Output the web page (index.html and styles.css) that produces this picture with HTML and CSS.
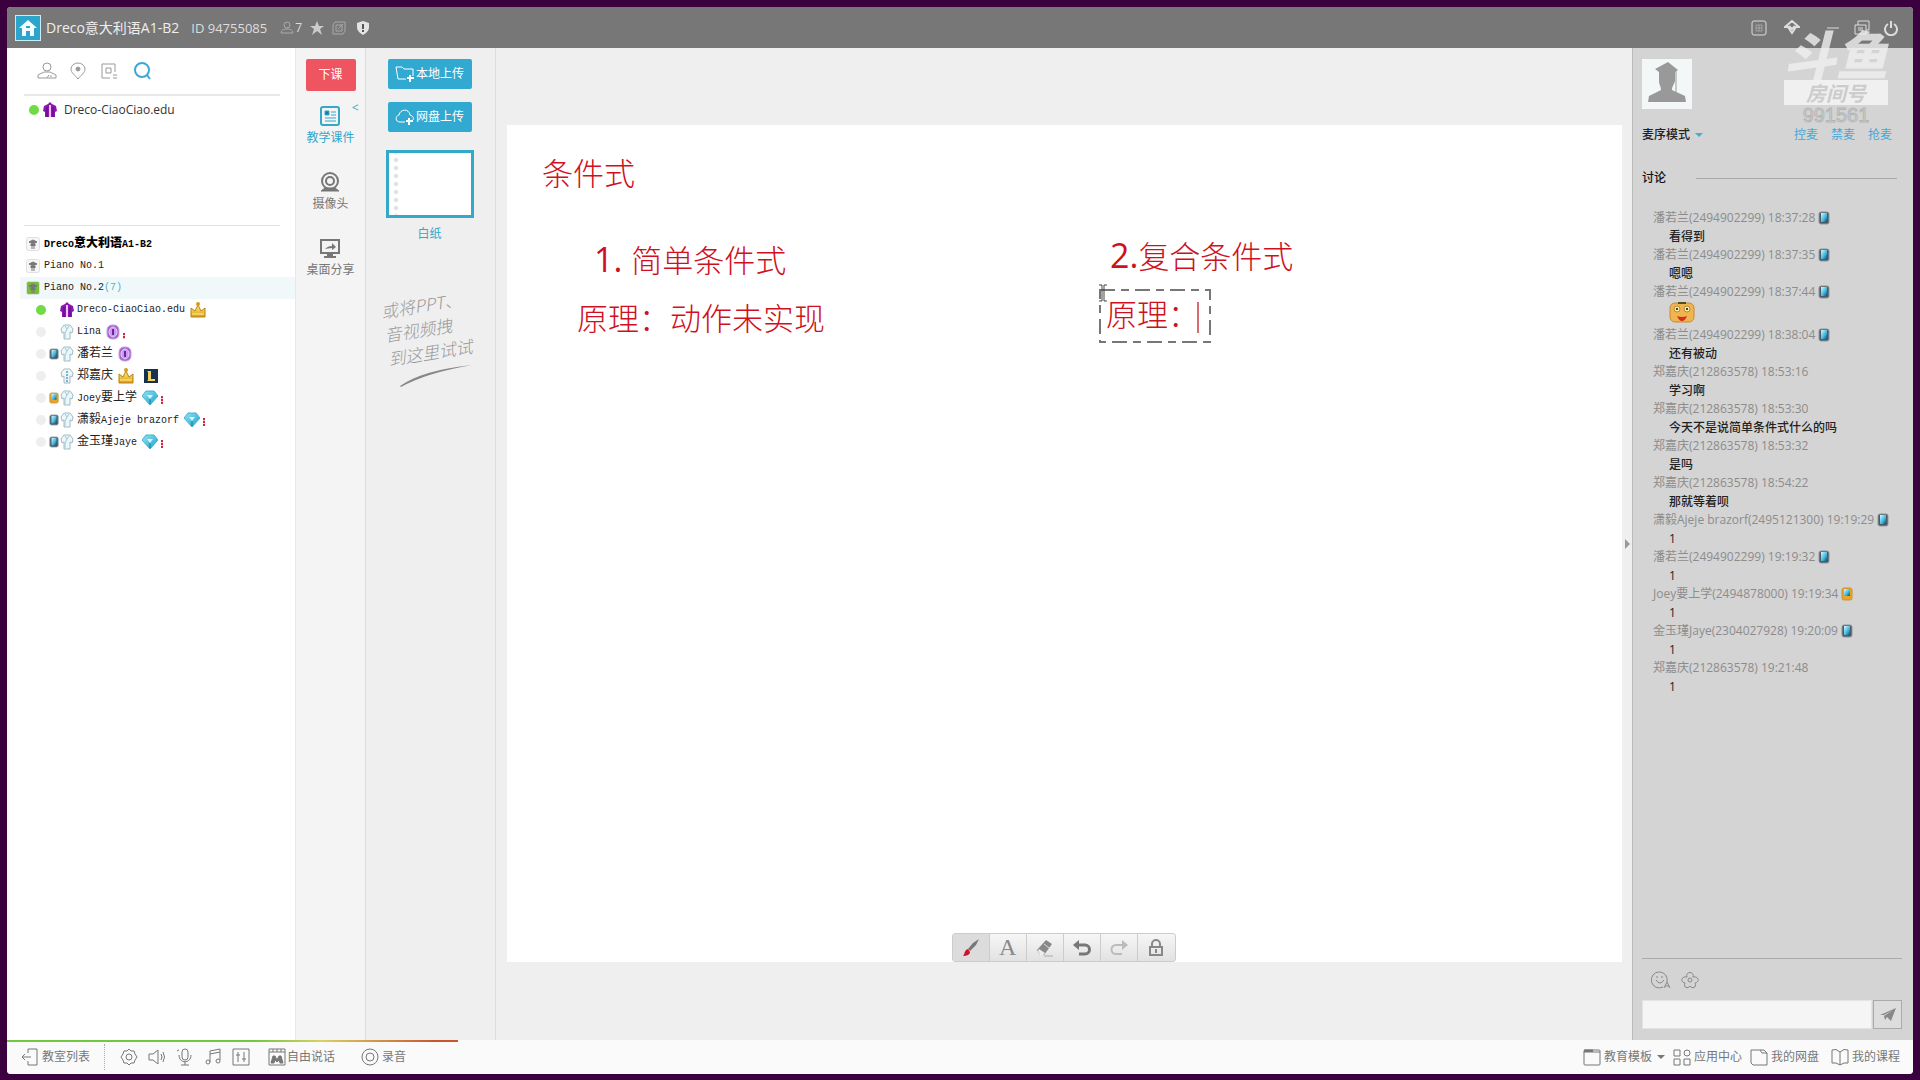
FILE: index.html
```html
<!DOCTYPE html>
<html lang="zh-CN">
<head>
<meta charset="utf-8">
<title>Dreco意大利语A1-B2</title>
<link rel="stylesheet" href="styles.css">
</head>
<body>
<svg class="defs" aria-hidden="true">
  <defs>
    <linearGradient id="gem-fill" x1="0" y1="0" x2="1" y2="1"><stop offset="0" stop-color="#8fe6f7"/><stop offset="1" stop-color="#1c9fc9"/></linearGradient>
    <linearGradient id="screen-fill" x1="0" y1="0" x2="1" y2="1"><stop offset="0" stop-color="#d8fbff"/><stop offset=".6" stop-color="#3fb4dc"/><stop offset="1" stop-color="#0b4a70"/></linearGradient>
    <linearGradient id="gold-fill" x1="0" y1="0" x2="0" y2="1"><stop offset="0" stop-color="#fff07a"/><stop offset="1" stop-color="#dc9a12"/></linearGradient>
  </defs>
  <symbol id="shirt" viewBox="0 0 14 16"><path d="M4 1h6l3 4-1 4-2-1v7H4V8L2 9 1 5z" fill="#eef6f8" stroke="#9fbcc6"/><path d="M5 2l2 3 2-3M7 5L5 9v5" fill="none" stroke="#9cc8d4"/></symbol>
  <symbol id="shirt-stripe" viewBox="0 0 14 16"><path d="M4 1h6l3 4-1 4-2-1v7H4V8L2 9 1 5z" fill="#f0f6f8" stroke="#a5b8c2"/><path d="M7 3v11" stroke="#6db7d6" stroke-width="2" stroke-dasharray="2 1"/></symbol>
  <symbol id="robe" viewBox="0 0 14 16"><path d="M5 2l2-2 2 2 4 2 1 5-2 1v5H2v-5L0 9l1-5z" fill="#8a16b4"/><path d="M7 3v12" stroke="#f0c4ff" stroke-width="2"/><path d="M4 5v10M10 5v10" stroke="#5c0b7d"/></symbol>
  <symbol id="phone" viewBox="0 0 12 14"><rect x="1" y="1" width="10" height="12" rx="2" fill="#4b5a66" stroke="#8b979e"/><rect x="3" y="2" width="6" height="9" fill="url(#screen-fill)"/></symbol>
  <symbol id="phone-gold" viewBox="0 0 12 14"><rect x="1" y="1" width="10" height="12" rx="2" fill="#e8a52a" stroke="#c9932d"/><rect x="3" y="2" width="6" height="7" fill="url(#screen-fill)"/></symbol>
  <symbol id="crown" viewBox="0 0 16 16"><path d="M1 6l4 3 3-6 3 6 4-3v9H1z" fill="url(#gold-fill)" stroke="#b98312"/><circle cx="8" cy="2" r="2" fill="#d99b1b"/><path d="M2 12h12" stroke="#fff2a0"/></symbol>
  <symbol id="badge" viewBox="0 0 14 16"><rect x="1" y="1" width="12" height="14" rx="5" fill="#a45fd0" stroke="#c9a2e4"/><ellipse cx="7" cy="8" rx="4" ry="5" fill="#c89af0" stroke="#e6d0f6"/><path d="M7 5v6" stroke="#6a2598" stroke-width="2"/></symbol>
  <symbol id="gem" viewBox="0 0 16 16"><path d="M4 1h8l4 5-8 9-8-9z" fill="url(#gem-fill)" stroke="#4aaecb"/><path d="M5 5h6l-3 4z" fill="#fff" opacity=".8"/><path d="M8 9v5" stroke="#0f7fa8"/></symbol>
  <symbol id="league" viewBox="0 0 14 14"><path d="M0 0h14v14H0z" fill="#16304f"/><path d="M3 2h4v8h4v2H3l1-1V3z" fill="#f4cf62"/></symbol>
  <symbol id="school" viewBox="0 0 14 14"><rect x=".5" y=".5" width="13" height="13" rx="2" fill="currentColor" stroke="#e0e0e0"/><path d="M3 5l4-2 4 2-4 2zM5 7v2h4V7M5 11h4" fill="#777" stroke="#777"/></symbol>
</svg>

<div class="window">
  <header class="titlebar">
    <button class="home" aria-label="主页"><svg viewBox="0 0 24 24" width="24" height="24"><path d="M12 4l9 8h-3v8h-4v-5h-4v5H6v-8H3z" fill="#f4fcff"/><path d="M10 11h4" stroke="#2da5cb" stroke-width="2"/></svg></button>
    <h1 class="room-name">Dreco意大利语A1-B2</h1>
    <span class="room-id">ID 94755085</span>
    <span class="online"><svg viewBox="0 0 14 14" width="14" height="14" class="dim"><circle cx="7" cy="4" r="3"/><path d="M1 12c0-3 3-4 6-4s6 1 6 4z"/></svg>7</span>
    <svg class="tb-icon" viewBox="0 0 14 14" width="14" height="14"><path d="M7 0l2 5h5l-4 3 2 6-5-4-5 4 2-6-4-3h5z" fill="#ccc"/></svg>
    <svg class="tb-icon dim" viewBox="0 0 14 14" width="14" height="14"><path d="M3 1h10v9l-2 3H1V4zM4 4h6v6H4zM6 8l5-5"/></svg>
    <svg class="tb-icon shield" viewBox="0 0 14 14" width="14" height="14"><path d="M7 0l6 2v4c0 4-3 6-6 8-3-2-6-4-6-8V2z" fill="#e4e4e4"/><path d="M7 3v5M7 9v2" stroke="#555" stroke-width="2"/></svg>
    <div class="window-controls">
      <button aria-label="便签"><svg viewBox="0 0 16 16" width="16" height="16"><rect x="1" y="1" width="14" height="14" rx="2"/><path d="M5 5h6v6H5zM5 8h6M8 5v6" opacity=".4"/></svg></button>
      <button aria-label="皮肤"><svg viewBox="0 0 16 16" width="16" height="16"><path d="M8 1l7 6h-3l-4 6-4-6H1zM5 6l3 3 3-3" stroke-width="2"/></svg></button>
      <button aria-label="最小化"><svg viewBox="0 0 16 16" width="16" height="16"><path d="M2 8h12"/></svg></button>
      <button aria-label="还原"><svg viewBox="0 0 16 16" width="16" height="16"><path d="M1 5h11v9H1zM4 5V1h11v9h-3M4 8h5M4 10h5"/></svg></button>
      <button aria-label="退出"><svg viewBox="0 0 16 16" width="16" height="16"><path d="M5 4a6 6 0 1 0 6 0M8 1v7" stroke-width="2"/></svg></button>
    </div>
  </header>

  <main class="workspace">
    <aside class="members">
      <div class="member-tabs">
        <button aria-label="成员"><svg viewBox="0 0 20 18" width="20" height="18"><circle cx="10" cy="5" r="4"/><path d="M1 16v-3l6-3h6l6 3v3zM10 16l2-3M14 13v2"/></svg></button>
        <button aria-label="位置"><svg viewBox="0 0 20 18" width="20" height="18"><path d="M10 17C7 13 3 11 3 7a7 6 0 0 1 14 0c0 4-4 6-7 10z"/><circle cx="10" cy="7" r="2" fill="#999"/></svg></button>
        <button aria-label="列表"><svg viewBox="0 0 20 18" width="20" height="18"><path d="M11 16H3V2h13v8M7 6h5v5H7zM14 13h4M14 16h4"/></svg></button>
        <button class="search" aria-label="搜索"><svg viewBox="0 0 20 18" width="20" height="18"><circle cx="10" cy="8" r="7"/><path d="M15 13l3 4"/></svg></button>
      </div>
      <div class="speaker-list">
        <div class="speaker"><i class="dot on"></i><svg width="14" height="16"><use href="#robe"/></svg><span>Dreco-CiaoCiao.edu</span></div>
      </div>
      <ul class="tree">
        <li class="group top"><svg width="14" height="14"><use href="#school"/></svg><span>Dreco<b class="han">意大利语</b>A1-B2</span></li>
        <li class="group"><svg width="14" height="14"><use href="#school"/></svg><span>Piano No.1</span></li>
        <li class="group current"><svg width="14" height="14"><use href="#school"/></svg><span>Piano No.2<em>(7)</em></span></li>
        <li class="user"><i class="dot on"></i><span class="device"></span><svg width="14" height="16"><use href="#robe"/></svg><span class="nick">Dreco-CiaoCiao.edu</span><svg width="16" height="16"><use href="#crown"/></svg></li>
        <li class="user"><i class="dot"></i><span class="device"></span><svg width="14" height="16"><use href="#shirt"/></svg><span class="nick">Lina</span><svg width="14" height="16"><use href="#badge"/></svg><i class="level low"></i></li>
        <li class="user"><i class="dot"></i><span class="device"><svg width="10" height="12"><use href="#phone"/></svg></span><svg width="14" height="16"><use href="#shirt"/></svg><span class="nick han">潘若兰</span><svg width="14" height="16"><use href="#badge"/></svg></li>
        <li class="user"><i class="dot"></i><span class="device"></span><svg width="14" height="16"><use href="#shirt-stripe"/></svg><span class="nick han">郑嘉庆</span><svg width="16" height="16"><use href="#crown"/></svg><svg class="game" width="14" height="14"><use href="#league"/></svg></li>
        <li class="user"><i class="dot"></i><span class="device"><svg width="10" height="12"><use href="#phone-gold"/></svg></span><svg width="14" height="16"><use href="#shirt"/></svg><span class="nick">Joey<span class="han">要上学</span></span><svg width="16" height="16"><use href="#gem"/></svg><i class="level"></i></li>
        <li class="user"><i class="dot"></i><span class="device"><svg width="10" height="12"><use href="#phone"/></svg></span><svg width="14" height="16"><use href="#shirt"/></svg><span class="nick"><span class="han">潇毅</span>Ajeje brazorf</span><svg width="16" height="16"><use href="#gem"/></svg><i class="level"></i></li>
        <li class="user"><i class="dot"></i><span class="device"><svg width="10" height="12"><use href="#phone"/></svg></span><svg width="14" height="16"><use href="#shirt"/></svg><span class="nick"><span class="han">金玉瑾</span>Jaye</span><svg width="16" height="16"><use href="#gem"/></svg><i class="level"></i></li>
      </ul>
    </aside>

    <nav class="tools">
      <button class="end-class">下课</button>
      <button class="tool active"><svg viewBox="0 0 20 20" width="20" height="20"><rect x="1" y="1" width="18" height="18" rx="2" stroke-width="2"/><path d="M11 6h5M11 9h5M5 12h11M5 15h11"/><path d="M5 5h4v4H5z" fill="#167fa0"/></svg>教学课件<span class="fold">&lt;</span></button>
      <button class="tool"><svg viewBox="0 0 20 20" width="20" height="20"><circle cx="10" cy="9" r="8" stroke-width="2"/><circle cx="10" cy="9" r="4" stroke-width="2"/><path d="M1 19h18l-4-3H5z" fill="#777"/></svg>摄像头</button>
      <button class="tool"><svg viewBox="0 0 20 20" width="20" height="20"><path d="M1 2h18v13H1z" stroke-width="2"/><path d="M5 11c2-2 4-3 7-3V5l4 4-4 3v-2c-3 0-5 1-7 1z" fill="#777" stroke="none"/><path d="M4 19h12M7 17h6" stroke-width="2"/></svg>桌面分享</button>
    </nav>

    <section class="files">
      <button class="upload"><svg viewBox="0 0 20 18" width="20" height="18"><path d="M11 14H3L1 2h6l2 2h9v7"/><path d="M15 10v7M12 13h7" stroke-width="2"/></svg>本地上传</button>
      <button class="upload"><svg viewBox="0 0 20 18" width="20" height="18"><path d="M10 14H5c-5 0-5-6-1-7 1-6 10-7 11 0 3 1 4 3 3 5"/><path d="M14 10v7M11 13h7" stroke-width="2"/></svg>网盘上传</button>
      <figure class="sheet"><div class="paper"></div><figcaption>白纸</figcaption></figure>
      <div class="hint"><p>或将PPT、<br>音视频拽<br>到这里试试</p><svg viewBox="0 0 76 26" width="76" height="26"><path d="M2 24Q25 8 74 3Q28 11 3 25z"/></svg></div>
    </section>

    <section class="stage">
      <div class="board">
        <p class="ink title">条件式</p>
        <p class="ink simple"><span class="num">1. </span>简单条件式</p>
        <p class="ink rule">原理：动作未实现</p>
        <p class="ink compound"><span class="num">2.</span>复合条件式</p>
        <div class="editing">
          <svg class="frame" viewBox="0 0 112 54" width="112" height="54"><rect x="1" y="1" width="110" height="52"/></svg>
          <input class="ink-input" value="原理：" aria-label="文字">
          <span class="caret"></span>
          <svg class="ibeam" viewBox="0 0 10 18" width="10" height="18"><path d="M1 1h3v16H1M9 1H6v16h3"/></svg>
        </div>
        <div class="draw-bar">
          <button class="on" aria-label="画笔"><svg viewBox="0 0 20 20" width="20" height="20"><path d="M18 1l-3 6-6 6-2-2 5-6z" fill="#777"/><path d="M7 11l2 3c0 3-4 4-7 4 2-2 1-6 5-7z" fill="#d20f2c"/></svg></button>
          <button class="letter" aria-label="文本">A</button>
          <button aria-label="橡皮"><svg viewBox="0 0 20 20" width="20" height="20"><path d="M2 12L11 2l6 4-8 11H5z" fill="#888"/><path d="M4 11l6 4-2 2H5l-2-4z" fill="#eee"/><path d="M9 6l5 4" stroke="#ddd" fill="none"/><path d="M9 18h9" stroke="#aaa"/></svg></button>
          <button aria-label="撤销"><svg viewBox="0 0 20 20" width="20" height="20"><path d="M4 7h9a4 4 0 0 1 0 9H7" fill="none" stroke="#777" stroke-width="3"/><path d="M7 2v10L1 7z" fill="#777"/></svg></button>
          <button aria-label="重做"><svg viewBox="0 0 20 20" width="20" height="20"><path d="M16 7H7a4 4 0 0 0 0 9h6" fill="none" stroke="#bbb" stroke-width="2"/><path d="M13 2v10l6-5z" fill="#bbb"/></svg></button>
          <button aria-label="锁定"><svg viewBox="0 0 20 20" width="20" height="20"><path d="M6 9V6a4 4 0 0 1 8 0v3M4 9h12v8H4zM10 11v4" fill="none" stroke="#888" stroke-width="2"/></svg></button>
        </div>
      </div>
      <button class="collapse" aria-label="收起"></button>
    </section>

    <aside class="chat">
      <svg class="avatar" viewBox="0 0 50 50" width="50" height="50"><path d="M0 0h50v50H0z" fill="#f4f7f8"/><path d="M13 10L26 3l10 8-3 2v9c-1 4-3 5-3 9l13 6 1 6H6l1-6 12-6c0-4-2-5-2-9v-9z" fill="#999"/><path d="M34 12v21" stroke="#999"/></svg>
      <div class="mic-row"><button class="mode">麦序模式<i class="down"></i></button><span class="mic-links"><a href="#">控麦</a><a href="#">禁麦</a><a href="#">抢麦</a></span></div>
      <h2 class="chat-title">讨论</h2>
      <div class="log">
        <p class="who">潘若兰(2494902299) 18:37:28<svg width="12" height="14"><use href="#phone"/></svg></p><p class="say">看得到</p>
        <p class="who">潘若兰(2494902299) 18:37:35<svg width="12" height="14"><use href="#phone"/></svg></p><p class="say">嗯嗯</p>
        <p class="who">潘若兰(2494902299) 18:37:44<svg width="12" height="14"><use href="#phone"/></svg></p>
        <p class="say face"><svg viewBox="0 0 26 22" width="26" height="22"><rect x="1" y="2" width="24" height="19" rx="5" fill="#f0b550" stroke="#c98931"/><path d="M9 1h8v2H9z" fill="#5a4a20"/><circle cx="8" cy="8" r="3" fill="#fff0a8" stroke="#b0863a"/><circle cx="18" cy="8" r="3" fill="#fff0a8" stroke="#b0863a"/><circle cx="8" cy="8" r="1"/><circle cx="18" cy="8" r="1"/><path d="M8 15q5 2 10 0q-2 5-5 5t-5-5z" fill="#d52c1c"/></svg></p>
        <p class="who">潘若兰(2494902299) 18:38:04<svg width="12" height="14"><use href="#phone"/></svg></p><p class="say">还有被动</p>
        <p class="who">郑嘉庆(212863578) 18:53:16</p><p class="say">学习啊</p>
        <p class="who">郑嘉庆(212863578) 18:53:30</p><p class="say">今天不是说简单条件式什么的吗</p>
        <p class="who">郑嘉庆(212863578) 18:53:32</p><p class="say">是吗</p>
        <p class="who">郑嘉庆(212863578) 18:54:22</p><p class="say">那就等着呗</p>
        <p class="who">潇毅Ajeje brazorf(2495121300) 19:19:29<svg width="12" height="14"><use href="#phone"/></svg></p><p class="say">1</p>
        <p class="who">潘若兰(2494902299) 19:19:32<svg width="12" height="14"><use href="#phone"/></svg></p><p class="say">1</p>
        <p class="who">Joey要上学(2494878000) 19:19:34<svg width="12" height="14"><use href="#phone-gold"/></svg></p><p class="say">1</p>
        <p class="who">金玉瑾Jaye(2304027928) 19:20:09<svg width="12" height="14"><use href="#phone"/></svg></p><p class="say">1</p>
        <p class="who">郑嘉庆(212863578) 19:21:48</p><p class="say">1</p>
      </div>
      <div class="chat-tools">
        <button aria-label="表情"><svg viewBox="0 0 20 18" width="20" height="18"><path d="M12 16a8 8 0 1 1 4-5M5 9q4 6 8 0M6 5v2M11 5v2M13 17l3-6 3 6M14 15h4"/></svg></button>
        <button aria-label="献花"><svg viewBox="0 0 20 18" width="20" height="18"><path d="M7 6C5 0 15 0 13 6c6-1 7 5 2 6 2 5-3 6-5 3-2 3-7 2-5-3-5-1-4-7 2-6z"/><circle cx="10" cy="9" r="2"/></svg></button>
      </div>
      <form class="compose"><input type="text" aria-label="发言"><button type="button" aria-label="发送"><svg viewBox="0 0 18 16" width="18" height="16"><path d="M1 8l16-7-5 13-4-4-2 3-1-4 9-6-9 5z" fill="#888"/></svg></button></form>
    </aside>
  </main>

  <footer class="statusbar">
    <div class="volume"></div>
    <button class="rooms"><svg viewBox="0 0 18 18" width="18" height="18"><path d="M7 5V1h9v16H7v-4M1 9h9M4 6L1 9l3 3"/></svg>教室列表</button>
    <div class="sound">
      <button aria-label="设置"><svg viewBox="0 0 18 18" width="18" height="18"><path d="M7 3l2-2 2 2h3l1 3 2 3-2 3-1 3h-3l-2 2-2-2H4l-1-3-2-3 2-3 1-3z"/><circle cx="9" cy="9" r="3"/></svg></button>
      <button aria-label="音量"><svg viewBox="0 0 18 18" width="18" height="18"><path d="M1 6h4l5-4v14l-5-4H1zM13 6q2 3 0 6M15 4q3 5 0 10"/></svg></button>
      <button aria-label="麦克风"><svg viewBox="0 0 18 18" width="18" height="18"><rect x="6" y="1" width="6" height="11" rx="3"/><path d="M3 7c0 9 12 9 12 0M9 14v3M5 17h8M1 3l2-1"/></svg></button>
      <button aria-label="音乐"><svg viewBox="0 0 18 18" width="18" height="18"><path d="M6 14V3l10-2v11M6 6l10-2"/><circle cx="4" cy="14" r="2"/><circle cx="14" cy="13" r="2"/></svg></button>
      <button aria-label="混音"><svg viewBox="0 0 18 18" width="18" height="18"><path d="M1 1h16v16H1zM6 4v10M12 4v10M4 7h4M10 11h4"/></svg></button>
    </div>
    <button class="talk"><svg viewBox="0 0 18 18" width="18" height="18"><path d="M1 1h16v16H1zM1 4h16M5 1v3M9 1v3M13 1v3"/><path d="M3 15l2-7h2l2 4 2-4h2l2 7h-3l-1-3-2 2-2-2-1 3z" fill="#777"/></svg>自由说话</button>
    <button class="record"><svg viewBox="0 0 18 18" width="18" height="18"><circle cx="9" cy="9" r="8"/><circle cx="9" cy="9" r="4"/></svg>录音</button>
    <div class="links">
      <button><svg viewBox="0 0 18 18" width="18" height="18"><rect x="1" y="2" width="16" height="15" rx="1"/><path d="M1 3h9" stroke-width="3"/><path d="M10 4h7"/></svg>教育模板<i class="down grey"></i></button>
      <button><svg viewBox="0 0 18 18" width="18" height="18"><path d="M1 2h6v6H1zM1 11h6v6H1zM11 11h6v6h-6z"/><circle cx="14" cy="5" r="3"/></svg>应用中心</button>
      <button><svg viewBox="0 0 18 18" width="18" height="18"><path d="M1 15V2h9l2 3h5v12H3zM10 2h4l3 3"/></svg>我的网盘</button>
      <button class="course"><svg viewBox="0 0 18 18" width="18" height="18"><path d="M9 4Q5 0 1 2v13q4-1 8 2 4-3 8-2V2q-4-2-8 2v13"/></svg>我的课程</button>
    </div>
  </footer>

  <div class="watermark"><strong>斗鱼</strong><span class="label">房间号</span><span class="number">991561</span></div>
</div>
</body>
</html>
```
FILE: styles.css
```css
* { box-sizing: border-box; }
html, body { height: 100%; }
body {
  margin: 0;
  padding: 7px 7px 6px;
  background: #3b003e;
  color: #333;
  font: 12px/18px "Open Sans", "Noto Sans CJK SC", sans-serif;
}
p, h1, h2, ul, figure { margin: 0; padding: 0; }
ul { list-style: none; }
button {
  display: flex;
  align-items: center;
  margin: 0;
  padding: 0;
  border: 0;
  background: none;
  color: inherit;
  font: inherit;
}
svg { display: block; flex: none; }
button svg { fill: none; stroke: currentColor; }
.draw-bar svg, .home svg, .compose svg { stroke: none; }
.defs { position: absolute; width: 0; height: 0; }

.window {
  position: relative;
  display: flex;
  flex-direction: column;
  height: 100%;
  overflow: hidden;
  border-radius: 4px;
  background: #fafafa;
}

/* title bar */
.titlebar {
  display: flex;
  align-items: center;
  flex: none;
  height: 41px;
  padding: 0 14px 0 8px;
  background: #777;
  color: #ddd;
}
.home { border: 1px solid #c8edf7; background: #2da5cb; margin-right: 5px; }
.room-name { font-size: 14px; font-weight: 400; color: #eee; }
.room-id { margin-left: 12px; font-size: 13px; }
.online { display: flex; align-items: center; gap: 1px; margin-left: 13px; }
.tb-icon { margin-left: 8px; }
.tb-icon.shield { margin-left: 10px; }
.dim { fill: none; stroke: #aaa; }
.window-controls { display: flex; align-items: center; gap: 13px; margin-left: auto; color: #ddd; }
.window-controls button:first-child { margin-right: 4px; }
.window-controls button:nth-child(2) { margin-right: 12px; }

.workspace { display: flex; flex: 1; min-height: 0; }

/* members */
.members { width: 288px; flex: none; background: #fff; }
.member-tabs {
  display: flex;
  gap: 11px;
  height: 48px;
  margin: 0 15px 0 17px;
  padding: 0 0 0 13px;
  border-bottom: 2px solid #e8e8e8;
  align-items: center;
  color: #999;
}
.member-tabs .search { margin-left: 2px; color: #3ba9d4; }
.member-tabs .search svg { stroke-width: 2; }
.speaker-list { height: 130px; margin: 0 15px 0 17px; padding: 4px 5px; border-bottom: 1px solid #e2e2e2; }
.speaker { display: flex; align-items: center; height: 20px; }
.speaker svg { margin: 0 7px 0 4px; }
.dot { width: 10px; height: 10px; border-radius: 5px; background: #eee; }
.dot.on { background: #6fdb45; }
.tree { padding-top: 7px; font: 10px/22px "Liberation Mono", "Noto Sans CJK SC", monospace; color: #222; }
.tree li { display: flex; align-items: center; height: 22px; }
.tree .han { font-size: 12px; }
.group { margin-left: 13px; padding-left: 6px; gap: 4px; color: #222; }
.group svg { color: #f6f6f6; }
.group.top { font-weight: 700; color: #000; }
.group.current { background: #f0f8fa; }
.group.current svg { color: #75bd3a; }
.group em { font-style: normal; color: #4bb3d3; }
.user { padding-left: 29px; }
.device { width: 14px; padding-left: 3px; }
.nick { margin: 0 5px 0 3px; white-space: nowrap; }
.level { width: 2px; height: 8px; margin: 4px 0 0 3px; background: repeating-linear-gradient(#d3243f 0 2px, #f6c6ce 2px 3px); }
.level.low { height: 6px; margin-top: 8px; }
.game { margin-left: 10px; }

/* tool column */
.tools {
  display: flex;
  flex-direction: column;
  align-items: center;
  flex: none;
  width: 71px;
  padding-top: 11px;
  border-left: 1px solid #e8e8e8;
  border-right: 1px solid #ddd;
  background: #f4f4f4;
}
.end-class { justify-content: center; width: 50px; height: 32px; margin-bottom: 15px; border-radius: 2px; background: #ee5561; color: #fff; }
.tool { position: relative; flex-direction: column; gap: 3px; height: 41px; margin-bottom: 25px; color: #777; }
.tool.active { color: #35a7ca; }
.fold { position: absolute; top: -7px; right: -4px; }

/* courseware */
.files {
  display: flex;
  flex-direction: column;
  align-items: center;
  flex: none;
  width: 130px;
  padding: 11px 2px 0 0;
  border-right: 1px solid #ddd;
  background: #efefef;
}
.upload { justify-content: center; gap: 1px; width: 84px; height: 30px; margin-bottom: 13px; border-radius: 2px; background: #32a9d1; color: #fff; }
.sheet { margin-top: 5px; text-align: center; color: #35a7ca; }
.paper {
  width: 88px;
  height: 68px;
  margin-bottom: 7px;
  border: 3px solid #32a9c9;
  background: #fff radial-gradient(circle, #ddd 1px, transparent 3px) 2px 3px / 10px 8px repeat-y;
}
.hint { width: 92px; margin-top: 49px; color: #999; }
.hint p { font: italic 300 17px/24px "Noto Sans CJK SC", sans-serif; white-space: nowrap; transform: rotate(-9deg); }
.hint svg { margin-left: 14px; margin-top: -2px; fill: #888; }

/* whiteboard */
.stage { position: relative; flex: 1; min-width: 0; padding: 77px 10px 78px 11px; background: #efefef; }
.board { position: relative; height: 100%; background: #fff; }
.ink, .ink-input { font: 300 31px/40px "Noto Sans CJK SC", sans-serif; color: #cf1020; white-space: pre; }
.ink { position: absolute; }
.num { font: 400 34px/40px "Open Sans", sans-serif; }
.title { left: 35px; top: 27px; }
.simple { left: 87px; top: 114px; }
.rule { left: 70px; top: 172px; }
.compound { left: 603px; top: 110px; }
.editing { position: absolute; left: 592px; top: 164px; width: 112px; height: 54px; }
.frame { position: absolute; inset: 0; fill: none; stroke: #777; stroke-width: 2; stroke-dasharray: 15 6 8 6; }
.ink-input { position: absolute; left: 7px; top: 4px; width: 90px; height: 40px; padding: 0; border: 0; background: none; }
.caret { position: absolute; left: 98px; top: 13px; width: 2px; height: 31px; background: #d86a70; }
.ibeam { position: absolute; left: -1px; top: -5px; fill: none; stroke: #444; }
.draw-bar {
  position: absolute;
  left: 50%;
  bottom: 0;
  display: flex;
  width: 224px;
  height: 29px;
  margin-left: -113px;
  border: 1px solid #ccc;
  border-radius: 3px;
  background: linear-gradient(#f6f6f6, #e2e2e2);
}
.draw-bar button { flex: 1; justify-content: center; border-right: 1px solid #ccc; }
.draw-bar button:last-child { border: 0; }
.draw-bar .on { background: #dcdcdc; }
.draw-bar .letter { font: 24px/27px "Liberation Serif", serif; color: #888; }
.collapse { position: absolute; right: 2px; top: 491px; border: 5px solid transparent; border-left: 5px solid #999; border-right: 0; }

/* chat */
.chat {
  display: flex;
  flex-direction: column;
  flex: none;
  width: 281px;
  padding: 11px 11px 11px 9px;
  border-left: 1px solid #bbb;
  background: #d4d4d4;
}
.mic-row { display: flex; justify-content: space-between; margin: 17px 10px 0 0; color: #222; }
.mode { gap: 5px; font-weight: 500; }
.down { border: 4px solid transparent; border-top-color: #45abd7; border-bottom: 0; }
.down.grey { border-top-color: #777; }
.mic-links { display: flex; gap: 13px; }
.mic-links a { color: #45a8d9; text-decoration: none; }
.chat-title { display: flex; align-items: center; gap: 30px; margin: 25px 5px 0 0; font-size: 12px; line-height: 18px; font-weight: 500; color: #111; }
.chat-title::after { content: ""; flex: 1; height: 1px; background: #aaa; }
.log { flex: 1; min-height: 0; padding: 22px 0 0 11px; border-bottom: 1px solid #aaa; overflow: hidden; }
.who { display: flex; align-items: center; gap: 3px; height: 18px; color: #8c8c8c; white-space: nowrap; }
.say { height: 19px; padding-left: 16px; line-height: 20px; color: #222; font-weight: 500; }
.say.face { height: 25px; }
.chat-tools { display: flex; gap: 9px; height: 41px; padding-left: 9px; color: #888; }
.compose { display: flex; gap: 1px; height: 29px; }
.compose input { flex: 1; min-width: 0; border: 1px solid #e4e4e4; background: #f5f5f5; }
.compose button { justify-content: center; width: 29px; border: 1px solid #aaa; background: #ddd; }

/* status bar */
.statusbar { position: relative; display: flex; align-items: center; flex: none; height: 34px; padding: 0 13px 0 14px; background: #fafafa; color: #777; }
.statusbar button { gap: 3px; white-space: nowrap; }
.volume { position: absolute; left: 0; top: 0; width: 451px; height: 2px; background: linear-gradient(90deg, #72c83e 55%, #dcd060 70%, #c9552c 95%); }
.rooms { padding-right: 14px; border-right: 1px dotted #aaa; height: 26px; }
.sound { display: flex; gap: 10px; margin-left: 15px; }
.statusbar .talk { margin-left: 18px; gap: 1px; }
.statusbar .record { margin-left: 26px; }
.links { display: flex; gap: 8px; margin-left: auto; }
.links .down { margin-left: 2px; }
.links .course { margin-left: 4px; }

/* stream overlay */
.watermark {
  position: absolute;
  top: 18px;
  right: 25px;
  display: flex;
  flex-direction: column;
  align-items: center;
  width: 104px;
  pointer-events: none;
}
.watermark strong { font: italic 900 52px/55px "Noto Sans CJK SC", sans-serif; color: #f0f0f0; opacity: .8; }
.watermark .label { align-self: stretch; height: 25px; font: italic 700 20px/25px "Noto Sans CJK SC", sans-serif; text-align: center; background: #f0f0f0; color: #ccc; }
.watermark .number { font: 20px/20px "Liberation Sans", sans-serif; color: #d4d4d4; -webkit-text-stroke: 1px #b4b4b4; }
```
